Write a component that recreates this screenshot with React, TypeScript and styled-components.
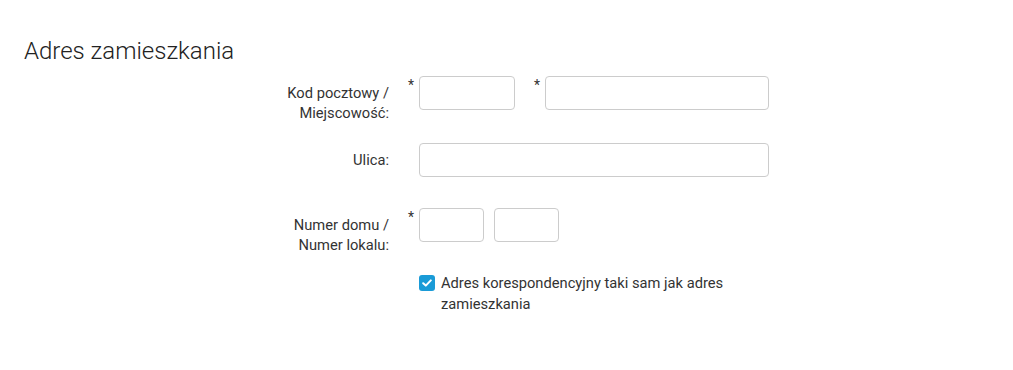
import React from "react";
import styled, { createGlobalStyle } from "styled-components";

const GlobalStyle = createGlobalStyle`
  html, body {
    margin: 0;
    padding: 0;
    background: #fff;
  }
  body {
    font-family: Roboto, "Liberation Sans", Arial, sans-serif;
    color: #333;
  }
`;

const Page = styled.section`
  width: 1013px;
  height: 370px;
  padding: 38px 24px 0;
  box-sizing: border-box;
`;

const Title = styled.h2`
  margin: 0 0 11px;
  font-size: 24px;
  line-height: 27px;
  font-weight: 300;
  color: #222;
`;

const Form = styled.div`
  display: flex;
  flex-direction: column;
  padding-left: 225px;
`;

const Row = styled.div`
  display: flex;
  align-items: flex-start;
  min-height: 45px;
  margin-bottom: 20px;
`;

const Label = styled.label`
  width: 140px;
  padding-top: 7px;
  text-align: right;
  font-size: 14.7px;
  line-height: 20px;
  color: #333;
`;

const Fields = styled.div`
  display: flex;
  align-items: flex-start;
`;

const Star = styled.span<{ $slot: number }>`
  width: ${(p) => p.$slot}px;
  box-sizing: border-box;
  padding-right: 5px;
  text-align: right;
  font-size: 14px;
  line-height: 18px;
  color: #333;
`;

const Input = styled.input<{ $w: number }>`
  width: ${(p) => p.$w}px;
  height: 34px;
  box-sizing: border-box;
  border: 1px solid #ccc;
  border-radius: 4px;
  padding: 6px 10px;
  font: inherit;
  font-size: 14px;
  background: #fff;
  outline: none;
`;

const CheckRow = styled.label`
  display: flex;
  align-items: flex-start;
  gap: 6px;
  margin-left: 170px;
  width: 350px;
  cursor: pointer;
`;

const Box = styled.span`
  flex: none;
  width: 16px;
  height: 16px;
  border-radius: 3px;
  background: #1a9bd7;
  display: flex;
  align-items: center;
  justify-content: center;
`;

const CheckText = styled.span`
  font-size: 14.7px;
  line-height: 21px;
  color: #333;
  margin-top: -2px;
`;

const App: React.FC = () => {
  return (
    <>
      <GlobalStyle />
      <Page>
        <Title>Adres zamieszkania</Title>
        <Form>
          <Row>
            <Label>
              Kod pocztowy /<br />
              Miejscowość:
            </Label>
            <Fields>
              <Star $slot={30}>*</Star>
              <Input $w={96} />
              <Star $slot={30}>*</Star>
              <Input $w={224} />
            </Fields>
          </Row>
          <Row>
            <Label>Ulica:</Label>
            <Fields>
              <Star $slot={30} />
              <Input $w={350} />
            </Fields>
          </Row>
          <Row>
            <Label>
              Numer domu /<br />
              Numer lokalu:
            </Label>
            <Fields>
              <Star $slot={30}>*</Star>
              <Input $w={65} />
              <Star $slot={10} />
              <Input $w={65} />
            </Fields>
          </Row>
          <CheckRow>
            <Box>
              <svg width="10" height="8" viewBox="0 0 10 8">
                <path
                  d="M1.2 4.2 L3.8 6.6 L8.8 1.4"
                  fill="none"
                  stroke="#fff"
                  strokeWidth="2"
                  strokeLinecap="round"
                  strokeLinejoin="round"
                />
              </svg>
            </Box>
            <CheckText>Adres korespondencyjny taki sam jak adres zamieszkania</CheckText>
          </CheckRow>
        </Form>
      </Page>
    </>
  );
};

export default App;
